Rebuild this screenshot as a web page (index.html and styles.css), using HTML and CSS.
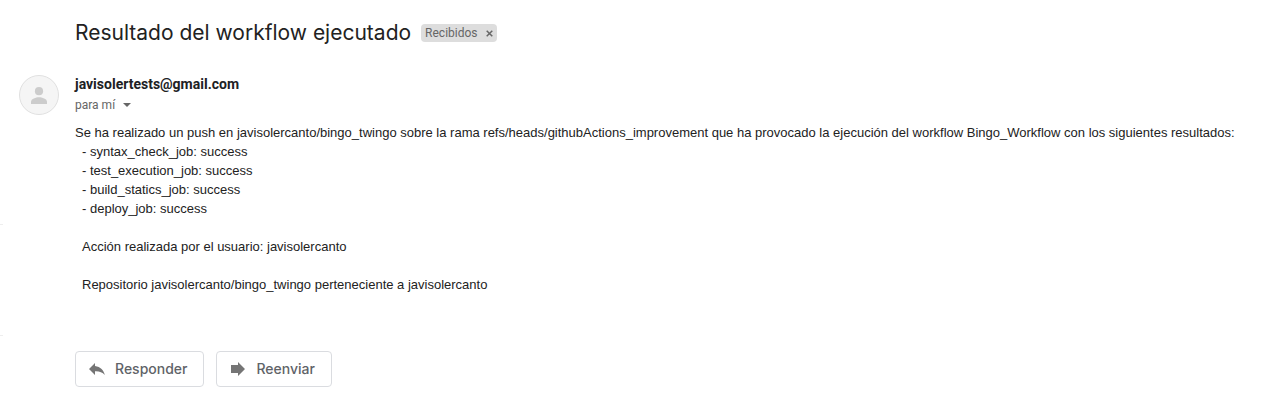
FILE: index.html
```html
<!DOCTYPE html>
<html lang="es">
<head>
<meta charset="utf-8">
<title>Resultado del workflow ejecutado</title>
<link rel="stylesheet" href="styles.css">
</head>
<body>
<div class="page">
  <div class="rail"><div class="rail-section"></div></div>
  <main class="thread">
    <header class="subject">
      <h1 class="subject-title">Resultado del workflow ejecutado</h1>
      <span class="label">Recibidos
        <button class="label-remove" type="button" aria-label="Quitar etiqueta Recibidos">
          <svg width="7" height="7" viewBox="0 0 7 7"><path d="M0.7 0.7l5.6 5.6M6.3 0.7L0.7 6.3" stroke="#666" stroke-width="1.5"/></svg>
        </button>
      </span>
    </header>
    <article class="message">
      <svg class="avatar" width="40" height="40" viewBox="0 0 40 40" aria-hidden="true">
        <circle cx="20" cy="20" r="19.5" fill="#f5f5f5" stroke="#e0e0e0"/>
        <circle cx="20" cy="16.2" r="4.1" fill="#ccc"/>
        <path d="M12 29v-2.2c0-3 5-4.600 8-4.600s8 1.600 8 4.600V29z" fill="#ccc"/>
      </svg>
      <div class="content">
        <div class="sender">javisolertests@gmail.com</div>
        <button class="recipient" type="button">para mí
          <svg width="8" height="4" viewBox="0 0 8 4" aria-hidden="true"><path d="M0 0h8L4 4z" fill="#666"/></svg>
        </button>
        <div class="body">
          <p class="line">Se ha realizado un push en javisolercanto/bingo_twingo sobre la rama refs/heads/githubActions_improvement que ha provocado la ejecución del workflow Bingo_Workflow con los siguientes resultados:</p>
          <ul class="jobs">
            <li>- syntax_check_job: success</li>
            <li>- test_execution_job: success</li>
            <li>- build_statics_job: success</li>
            <li>- deploy_job: success</li>
          </ul>
          <p class="note">Acción realizada por el usuario: javisolercanto</p>
          <p class="note">Repositorio javisolercanto/bingo_twingo perteneciente a javisolercanto</p>
        </div>
        <div class="actions">
          <button class="action" type="button">
            <svg width="16" height="14" viewBox="0 0 16 14" aria-hidden="true"><path d="M6 4V1L0 7l6 6V9.300c4.300-.2 7.300.9 9.800 3.700C14.800 8.300 11.500 4.800 6 4z" fill="#757575"/></svg>
            Responder
          </button>
          <button class="action" type="button">
            <svg width="16" height="14" viewBox="0 0 16 14" aria-hidden="true"><path d="M1 3h7V0l7 7-7 7v-3H1z" fill="#757575"/></svg>
            Reenviar
          </button>
        </div>
      </div>
    </article>
  </main>
</div>
</body>
</html>
```
FILE: styles.css
```css
* { box-sizing: border-box; }

body {
  margin: 0;
  background: #fff;
  color: #222;
  font-family: "Liberation Sans", Arial, sans-serif;
}

button {
  border: 0;
  padding: 0;
  background: none;
  font: inherit;
  color: inherit;
  cursor: pointer;
}

.page { display: flex; }

.rail {
  flex: 0 0 3px;
  padding-top: 224px;
}

.rail-section {
  height: 112px;
  border-top: 1px solid #eee;
  border-bottom: 1px solid #eee;
}

.thread {
  flex: 1;
  min-width: 0;
  padding: 18px 16px 24px;
}

.subject {
  display: flex;
  align-items: center;
  gap: 10px;
  padding-left: 56px;
}

.subject-title {
  margin: 0;
  font-family: Inter, sans-serif;
  font-size: 21px;
  font-weight: 400;
  line-height: 30px;
}

.label {
  display: flex;
  align-items: center;
  gap: 8px;
  height: 18px;
  padding: 0 4px;
  border-radius: 4px;
  background: #ddd;
  color: #666;
  font-family: Roboto, sans-serif;
  font-size: 12px;
}

.label-remove { display: flex; }

.message {
  display: flex;
  gap: 16px;
  margin-top: 27px;
}

.avatar { flex: none; }

.content {
  flex: 1;
  min-width: 0;
}

.sender {
  font-family: Roboto, sans-serif;
  font-size: 14px;
  font-weight: 700;
  line-height: 19px;
  color: #202124;
}

.recipient {
  display: flex;
  align-items: center;
  gap: 8px;
  color: #666;
  font-family: Roboto, sans-serif;
  font-size: 12px;
  line-height: 22px;
}

.body {
  margin-top: 7px;
  font-size: 13px;
  line-height: 19px;
}

.line { margin: 0; }

.jobs {
  margin: 0;
  padding: 0 0 0 7px;
  list-style: none;
}

.note {
  margin: 19px 0 0;
  padding-left: 7px;
}

.actions {
  display: flex;
  gap: 12px;
  margin-top: 57px;
}

.action {
  display: flex;
  align-items: center;
  gap: 10px;
  height: 36px;
  padding: 0 16px 1px 13px;
  border: 1px solid #dadce0;
  border-radius: 4px;
  color: #5f6368;
  font-family: Inter, sans-serif;
  font-size: 14px;
  font-weight: 500;
}
```
